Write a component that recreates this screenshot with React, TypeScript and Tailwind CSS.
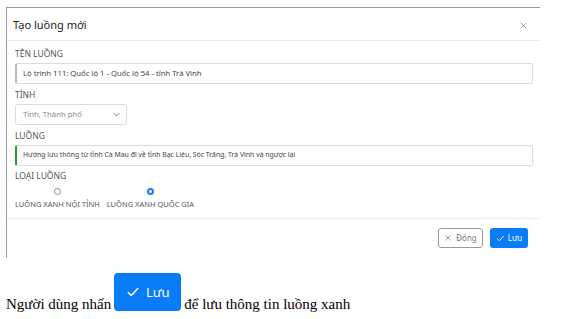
import React from "react";

const Check = ({ className }: { className?: string }) => (
  <svg viewBox="0 0 16 16" className={className} fill="none" stroke="currentColor" strokeWidth="1.6" strokeLinecap="round" strokeLinejoin="round">
    <path d="M2.5 8.5l3.5 3.5 7.5-8" />
  </svg>
);

const Cross = ({ className }: { className?: string }) => (
  <svg viewBox="0 0 16 16" className={className} fill="none" stroke="currentColor" strokeWidth="1.4" strokeLinecap="round">
    <path d="M3.5 3.5l9 9M12.5 3.5l-9 9" />
  </svg>
);

export default function App() {
  return (
    <div className="w-[576px] h-[319px] bg-white overflow-hidden">
      {/* modal */}
      <div className="ml-[6px] mt-[7px] w-[534px] h-[251px] border-t border-l border-[#9a9a9a] font-['Noto_Sans',sans-serif] text-[#444]">
        <div className="h-[33px] flex items-center justify-between pt-[2px] pl-[6px] pr-[12px] border-b border-[#ececec]">
          <span className="text-[11px] text-[#222]">Tạo luồng mới</span>
          <Cross className="w-[9px] h-[9px] text-[#888]" />
        </div>

        <div className="pl-[8px] pr-[7px] pt-[7px] flex flex-col">
          <label className="text-[8.5px] leading-[12px] text-[#555]">TÊN LUỒNG</label>
          <div className="mt-[3px] h-[21px] flex items-center border border-[#dcdcdc] border-l-[2px] border-l-[#bbb] rounded-[2px] pl-[6px] text-[7.7px] text-[#444]">
            Lộ trình 111: Quốc lộ 1 - Quốc lộ 54 - tỉnh Trà Vinh
          </div>

          <label className="mt-[5px] text-[8.5px] leading-[12px] text-[#555]">TỈNH</label>
          <div className="mt-[3px] w-[112px] h-[21px] flex items-center justify-between border border-[#dcdcdc] rounded-[3px] pl-[7px] pr-[6px] text-[7.7px] text-[#888]">
            <span>Tỉnh, Thành phố</span>
            <svg viewBox="0 0 10 6" className="w-[7px] h-[5px]" fill="none" stroke="#666" strokeWidth="1.2">
              <path d="M1 1l4 4 4-4" />
            </svg>
          </div>

          <label className="mt-[5px] text-[8.5px] leading-[12px] text-[#555]">LUỒNG</label>
          <div className="mt-[3px] h-[21px] flex items-center border border-[#dcdcdc] border-l-[2px] border-l-[#2a9a3a] rounded-[2px] pl-[6px] text-[6.9px] text-[#444]">
            Hướng lưu thông từ tỉnh Cà Mau đi về tỉnh Bạc Liêu, Sóc Trăng, Trà Vinh và ngược lại
          </div>

          <label className="mt-[4px] text-[8.5px] leading-[12px] text-[#555]">LOẠI LUỒNG</label>
          <div className="mt-[6px] flex gap-[7px] text-[7.5px] text-[#555]">
            <div className="flex flex-col items-center">
              <span className="w-[7px] h-[7px] rounded-full border border-[#888] bg-white" />
              <span className="mt-[3px] leading-[12px]">LUỒNG XANH NỘI TỈNH</span>
            </div>
            <div className="flex flex-col items-center">
              <span className="w-[7px] h-[7px] rounded-full border-[2px] border-[#1e7be6] bg-white" />
              <span className="mt-[3px] leading-[12px]">LUỒNG XANH QUỐC GIA</span>
            </div>
          </div>
        </div>

        <div className="mt-[8px] border-t border-dotted border-[#ddd] flex justify-end gap-[7px] pt-[9px] pr-[12px]">
          <div className="h-[20px] w-[45px] flex items-center justify-center gap-[4px] border border-[#999] rounded-[3px] text-[8px] text-[#777]">
            <Cross className="w-[8px] h-[8px]" />
            <span>Đóng</span>
          </div>
          <div className="h-[20px] w-[38px] flex items-center justify-center gap-[3px] bg-[#0a7cf7] rounded-[3px] text-[8px] text-white">
            <Check className="w-[9px] h-[9px]" />
            <span>Lưu</span>
          </div>
        </div>
      </div>

      {/* caption */}
      <div className="mt-[15px] pl-[6px] flex items-end font-['Liberation_Serif',serif] text-[15px] leading-[13px] text-black">
        <span>Người dùng nhấn</span>
        <span className="mx-[3px] w-[67px] h-[38px] bg-[#0a7cf7] rounded-[4px] flex items-center justify-center gap-[6px] text-white font-['Noto_Sans',sans-serif] text-[13px] leading-[18px]">
          <Check className="w-[14px] h-[14px]" />
          <span>Lưu</span>
        </span>
        <span>để lưu thông tin luồng xanh</span>
      </div>
    </div>
  );
}
